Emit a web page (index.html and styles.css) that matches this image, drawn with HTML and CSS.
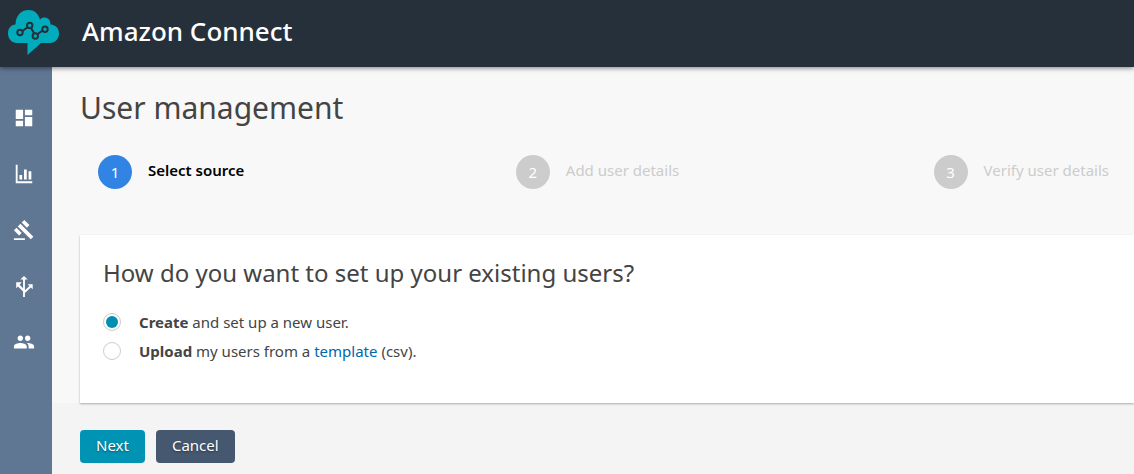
FILE: index.html
```html
<!DOCTYPE html>
<html lang="en">
<head>
<meta charset="utf-8">
<meta name="viewport" content="width=device-width, initial-scale=1">
<title>Amazon Connect</title>
<link rel="stylesheet" href="styles.css">
</head>
<body>
<header class="topbar">
  <svg class="logo" viewBox="0 0 52 46" aria-hidden="true">
    <path class="logo-cloud" d="M9 33C4 33 0 29 0 23.500C0 18 3 15 7.500 14.500C7.500 6 13 0 20.500 0C26 0 30 3 32 9.500C34 7.500 36 7.300 38 7.800C41 8.500 42.500 11 42.500 14.500C48 15 51 18.500 51 23.500C51 29 47 33 42 33H33L19.500 45V33Z"/>
    <g class="logo-graph">
      <path d="M14.200 21.200L19.800 17M22.800 17.600L26.200 23.500M29.300 24.300L34.800 20.400"/>
      <circle cx="12" cy="22.500" r="2.700"/>
      <circle cx="21.700" cy="15.400" r="2.700"/>
      <circle cx="27.300" cy="26" r="2.700"/>
      <circle cx="37" cy="19.300" r="2.700"/>
    </g>
  </svg>
  <span class="brand">Amazon Connect</span>
</header>
<div class="shell">
  <nav class="sidebar" aria-label="Main">
    <a class="nav-link" href="#" aria-label="Dashboard"><svg viewBox="0 0 24 24"><path d="M3 13h8V3H3v10zm0 8h8v-6H3v6zm10 0h8V11h-8v10zm0-18v6h8V3h-8z"/></svg></a>
    <a class="nav-link" href="#" aria-label="Metrics"><svg viewBox="0 0 24 24"><path d="M3 2h2v18h16v2H3zM7 13h3v5H7zM12 7h3v11h-3zM17 9h3v9h-3z"/></svg></a>
    <a class="nav-link" href="#" aria-label="Rules"><svg viewBox="0 0 24 24"><path d="M1 21h12v2H1zM5.245 8.070l2.830-2.827 14.140 14.142-2.828 2.828zM12.317 1l5.657 5.656-2.830 2.830-5.654-5.660zM3.825 9.485l5.657 5.657-2.828 2.828-5.657-5.657z"/></svg></a>
    <a class="nav-link" href="#" aria-label="Routing"><svg viewBox="0 0 24 24"><path d="M12 1L16 5H13V16.500L18 12L16 10H21.500V15.500L19.500 13.500L13 19.500V24H11V18L5.500 12.500L3.500 14.500V8H9.500L7.200 10.500L11 14.500V5H8Z"/></svg></a>
    <a class="nav-link" href="#" aria-label="Users"><svg viewBox="0 0 24 24"><path d="M16 11c1.660 0 2.990-1.340 2.990-3S17.660 5 16 5s-3 1.340-3 3 1.340 3 3 3zm-8 0c1.660 0 2.990-1.340 2.990-3S9.660 5 8 5 5 6.340 5 8s1.340 3 3 3zm0 2c-2.330 0-7 1.170-7 3.500V19h14v-2.500c0-2.330-4.670-3.500-7-3.500zm8 0c-.290 0-.620.020-.970.050 1.160.840 1.970 1.970 1.970 3.450V19h6v-2.500c0-2.330-4.670-3.500-7-3.500z"/></svg></a>
  </nav>
  <main class="content">
    <h1 class="page-title">User management</h1>
    <ol class="steps">
      <li class="step step-active"><span class="step-number">1</span><span class="step-label">Select source</span></li>
      <li class="step"><span class="step-number">2</span><span class="step-label">Add user details</span></li>
      <li class="step"><span class="step-number">3</span><span class="step-label">Verify user details</span></li>
    </ol>
    <form>
      <fieldset class="panel">
        <legend class="panel-title">How do you want to set up your existing users?</legend>
        <div class="option">
          <input class="radio" type="radio" name="source" id="source-create" checked>
          <label for="source-create"><b>Create</b> and set up a new user.</label>
        </div>
        <div class="option">
          <input class="radio" type="radio" name="source" id="source-upload">
          <label for="source-upload"><b>Upload</b> my users from a <a class="link" href="#">template</a> (csv).</label>
        </div>
      </fieldset>
      <div class="actions">
        <button class="button button-primary" type="button">Next</button>
        <button class="button" type="button">Cancel</button>
      </div>
    </form>
  </main>
</div>
</body>
</html>
```
FILE: styles.css
```css
* {
  box-sizing: border-box;
}

body {
  display: flex;
  flex-direction: column;
  min-height: 100vh;
  margin: 0;
  background: #f4f4f4;
  color: #444;
  font: 15px/20px "Noto Sans", sans-serif;
}

.topbar {
  display: flex;
  align-items: center;
  gap: 22px;
  padding: 10px 8px 11px;
  background: #26303b;
  box-shadow: 0 1px 5px rgba(0, 0, 0, 0.5);
  z-index: 1;
}

.logo {
  width: 52px;
  height: 46px;
}

.logo-cloud {
  fill: #00abbc;
}

.logo-graph {
  fill: none;
  stroke: #26303b;
  stroke-width: 2;
}

.brand {
  padding-bottom: 4px;
  color: #fff;
  font-size: 26px;
  font-weight: 500;
  line-height: 32px;
}

.shell {
  display: flex;
  flex: 1;
}

.sidebar {
  display: flex;
  flex-direction: column;
  flex: none;
  gap: 32px;
  width: 52px;
  padding: 39px 16px 39px 12px;
  background: #607794;
}

.nav-link {
  display: flex;
  justify-content: center;
}

.nav-link svg {
  width: 24px;
  height: 24px;
  padding: 1px;
  fill: #fff;
}

.content {
  flex: 1;
  min-width: 0;
  padding-top: 20px;
  background: #f8f8f8;
}

.page-title {
  margin: 0 0 26px;
  padding-left: 28px;
  font-size: 30px;
  font-weight: 400;
  line-height: 42px;
}

.steps {
  display: grid;
  grid-template-columns: 1fr 1fr auto;
  margin: 0 0 46px;
  padding: 0 25px 0 46px;
  list-style: none;
}

.step {
  display: flex;
  align-items: center;
  gap: 16px;
  color: #ccc;
}

.step-number {
  display: grid;
  place-items: center;
  width: 34px;
  height: 34px;
  border-radius: 50%;
  background: #ccc;
  color: #fff;
}

.step-label {
  padding-bottom: 4px;
}

.step-active {
  color: #000;
  font-weight: 600;
}

.step-active .step-number {
  background: #3184e4;
  font-weight: 400;
}

.panel {
  position: relative;
  min-width: 0;
  margin: 0 0 0 28px;
  padding: 21px 23px 42px;
  border: 0;
  background: #fff;
  box-shadow: 0 1px 2px rgba(0, 0, 0, 0.3);
}

.panel-title {
  float: left;
  width: 100%;
  margin-bottom: 22px;
  padding: 0;
  font-size: 24px;
  line-height: 34px;
}

.option {
  display: flex;
  clear: both;
  align-items: center;
  gap: 18px;
  min-height: 20px;
}

.option + .option {
  margin-top: 9px;
}

.radio {
  flex: none;
  width: 18px;
  height: 18px;
  margin: 0;
  border: 1px solid #ccc;
  border-radius: 50%;
  appearance: none;
  background: #fff;
}

.radio:checked {
  padding: 2px;
  background: #008fb0 content-box;
}

.link {
  color: #0067ab;
  text-decoration: none;
}

.actions {
  display: flex;
  gap: 11px;
  padding: 27px 28px 11px;
  background: #f4f4f4;
}

.button {
  padding: 5px 16px 8px;
  border: 0;
  border-radius: 4px;
  background: #46586f;
  color: #fff;
  font: inherit;
  text-shadow: 0 1px 2px rgba(0, 0, 0, 0.4);
}

.button-primary {
  background: #0093b4;
}
```
